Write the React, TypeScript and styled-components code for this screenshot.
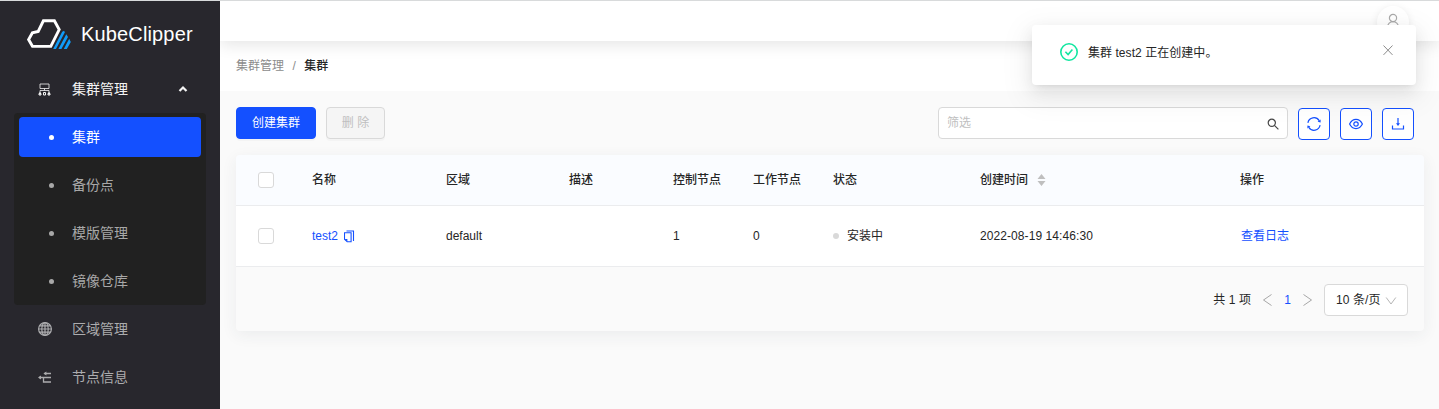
import React from 'react';
import styled, { createGlobalStyle } from 'styled-components';

const BLUE = '#1450ff';

const GlobalStyle = createGlobalStyle`
  * { box-sizing: border-box; }
  body {
    margin: 0;
    background: #fafafa;
    color: #262626;
    font: 12px/20px "Liberation Sans", "Noto Sans CJK SC", sans-serif;
    overflow: hidden;
  }
  svg { display: block; flex: none; }
`;

const Page = styled.div`
  display: flex;
  width: 100%;
  height: 409px;
  border-top: 1px solid #d8dadb;
`;

const Sidebar = styled.aside`
  width: 220px;
  flex: none;
  background: #28272d;
  padding: 0 14px;
`;

const Brand = styled.div`
  display: flex;
  align-items: center;
  gap: 9px;
  height: 64px;
  padding: 2px 0 0 13px;
  color: #fff;
  font-size: 20px;
  letter-spacing: 0.15px;
`;

const NavItem = styled.div<{ $bright?: boolean }>`
  display: flex;
  align-items: center;
  height: 48px;
  padding: 0 18px 0 23px;
  font-size: 14px;
  color: ${(p) => (p.$bright ? '#f4f4f4' : '#acacae')};
`;

const NavIcon = styled.span`
  width: 35px;
  flex: none;
`;

const NavLabel = styled.span`
  flex: 1;
`;

const SubMenu = styled.div`
  display: flex;
  flex-direction: column;
  gap: 8px;
  padding: 4px 5px;
  border-radius: 4px;
  background: #212121;
`;

const SubItem = styled.div<{ $active?: boolean }>`
  display: flex;
  align-items: center;
  gap: 18px;
  height: 40px;
  padding-left: 30px;
  border-radius: 4px;
  font-size: 14px;
  background: ${(p) => (p.$active ? BLUE : 'transparent')};
  color: ${(p) => (p.$active ? '#fff' : '#a8a8a8')};
`;

const Bullet = styled.span`
  width: 5px;
  height: 5px;
  border-radius: 50%;
  background: currentColor;
`;

const Main = styled.main`
  flex: 1;
  min-width: 0;
  overflow: hidden;
`;

const Header = styled.header`
  position: relative;
  display: flex;
  justify-content: flex-end;
  height: 40px;
  padding: 5px 30px 0 0;
  background: #fff;
  box-shadow: 0 4px 16px rgba(0, 0, 0, 0.1);
`;

const Avatar = styled.div`
  display: flex;
  justify-content: center;
  width: 32px;
  height: 32px;
  padding-top: 7px;
  border-radius: 50%;
  background: #fff;
  color: #aaa;
  box-shadow: 0 2px 8px rgba(0, 0, 0, 0.09);
`;

const Breadcrumb = styled.nav`
  display: flex;
  gap: 8.5px;
  height: 50px;
  padding: 15px 16px;
  background: #fff;
  color: #8c8c8c;
`;

const Current = styled.span`
  color: #262626;
  font-weight: 500;
`;

const Content = styled.section`
  padding: 16px 15px 0 16px;
`;

const Toolbar = styled.div`
  display: flex;
  align-items: flex-start;
  gap: 10px;
  height: 48px;
  padding-right: 10px;
`;

const Button = styled.button<{ $primary?: boolean }>`
  width: ${(p) => (p.$primary ? 80 : 59)}px;
  height: 32px;
  padding: 0;
  border: 1px solid ${(p) => (p.$primary ? BLUE : '#d9d9d9')};
  border-radius: 4px;
  background: ${(p) => (p.$primary ? BLUE : '#f5f5f5')};
  color: ${(p) => (p.$primary ? '#fff' : '#bfbfbf')};
  font: inherit;
  box-shadow: 0 2px 0 rgba(0, 0, 0, 0.025);
`;

const Search = styled.div`
  display: flex;
  justify-content: space-between;
  width: 350px;
  height: 32px;
  margin-left: auto;
  padding: 5px 8px;
  border: 1px solid #d9d9d9;
  border-radius: 4px;
  background: #fff;
  color: #bfbfbf;
`;

const SearchIcon = styled.span`
  padding-top: 5px;
  color: #444;
`;

const Tools = styled.div`
  display: flex;
  gap: 10px;
  padding-top: 1px;
`;

const IconButton = styled.button`
  display: flex;
  align-items: center;
  justify-content: center;
  width: 32px;
  height: 32px;
  padding: 0;
  border: 1px solid ${BLUE};
  border-radius: 4px;
  background: #fff;
  color: ${BLUE};
`;

const Table = styled.div`
  border-radius: 4px;
  background: #fafafa;
  overflow: hidden;
  box-shadow: 0 4px 16px rgba(39, 50, 71, 0.07);
`;

const Row = styled.div<{ $head?: boolean }>`
  display: grid;
  grid-template-columns: 76px 134px 123px 104px 80px 80px 147px 260px 1fr;
  align-items: center;
  height: ${(p) => (p.$head ? 51 : 61)}px;
  border-bottom: 1px solid #ebecee;
  background: ${(p) => (p.$head ? '#fafcff' : '#fff')};
  font-weight: ${(p) => (p.$head ? 500 : 400)};
`;

const Cell = styled.div<{ $gap?: number }>`
  display: flex;
  align-items: center;
  gap: ${(p) => p.$gap ?? 0}px;
`;

const CheckCell = styled(Cell)`
  padding-left: 22px;
`;

const Checkbox = styled.span`
  width: 16px;
  height: 16px;
  border: 1px solid #d9d9d9;
  border-radius: 3px;
  background: #fff;
`;

const Link = styled.a`
  color: ${BLUE};
`;

const ActionCell = styled(Cell)`
  padding-left: 1px;
`;

const DateCell = styled(Cell)`
  letter-spacing: 0.08px;
`;

const CopyMark = styled.span`
  color: ${BLUE};
`;

const StatusDot = styled.span`
  width: 6px;
  height: 6px;
  border-radius: 50%;
  background: #d9d9d9;
`;

const Pagination = styled.footer`
  display: flex;
  align-items: center;
  justify-content: flex-end;
  height: 64px;
  padding: 1px 16px 0 0;
`;

const Total = styled.span`
  letter-spacing: 0.1px;
`;

const Arrow = styled.span`
  color: #a6a6a6;
  margin: 0 10px;
`;

const PageNumber = styled.span`
  width: 9px;
  text-align: center;
  color: ${BLUE};
`;

const PageSize = styled.div`
  display: flex;
  align-items: center;
  gap: 4px;
  width: 84px;
  height: 32px;
  padding-left: 11px;
  border: 1px solid #d9d9d9;
  border-radius: 4px;
  background: #fff;
  letter-spacing: 0.1px;
`;

const Chevron = styled.span`
  color: #b5b5b5;
  padding-top: 2px;
`;

const Notice = styled.div`
  position: absolute;
  top: 25px;
  right: 23px;
  display: flex;
  width: 384px;
  height: 60px;
  padding: 18px 22px 0 28px;
  border-radius: 4px;
  background: #fff;
  box-shadow: 0 3px 6px -4px rgba(0, 0, 0, 0.12), 0 6px 16px rgba(0, 0, 0, 0.08),
    0 9px 28px 8px rgba(0, 0, 0, 0.05);
`;

const NoticeText = styled.span`
  flex: 1;
  padding-left: 10px;
  letter-spacing: 0.05px;
`;

const CloseMark = styled.span`
  padding-top: 1px;
  color: #8c8c8c;
`;

type StrokeProps = { w: number; h?: number; sw?: number; children: React.ReactNode };

const Stroke = ({ w, h = w, sw = 1, children }: StrokeProps) => (
  <svg width={w} height={h} viewBox={`0 0 ${w} ${h}`} fill="none" stroke="currentColor" strokeWidth={sw}>
    {children}
  </svg>
);

const Logo = () => (
  <svg width="45" height="32" viewBox="0 0 45 32" fill="none">
    <path d="M5.6 28.4 1.6 21.5 5.4 14.8 11.2 13.4 16.4 2.8H27.4L32.2 11.6 23.8 28.4Z" stroke="#fff" strokeWidth="2.9" />
    <path
      d="M26.2 31 35.2 13.8 37 12.8 37.9 14.2 29 31ZM31.4 31 39.3 16.2 41 18.9 34.4 31ZM36.8 31 42.2 20.8 43.8 24 39.8 31Z"
      fill="#109cf9"
    />
  </svg>
);

const ClusterIcon = () => (
  <Stroke w={15} h={16}>
    <path d="M3 3h9v4.5H3zM7.5 7.5v2M3 12V9.5h9V12" opacity="0.8" />
    <path d="M3 11v3M2 12.5h2v1.5H2zM12 11v3M11 12.5h2v1.5h-2zM6.5 11.5h2v2.5h-2z" />
  </Stroke>
);

const GlobeIcon = () => (
  <Stroke w={16} sw={1.2}>
    <circle cx="8" cy="8" r="6.4" />
    <ellipse cx="8" cy="8" rx="3.2" ry="6.4" />
    <path d="M8 1.6v12.8M1.6 8h12.8M2.6 4.9h10.8M2.6 11.1h10.8" />
  </Stroke>
);

const NodeIcon = () => (
  <Stroke w={16} sw={1.3}>
    <path d="M2 8.5h12M6.5 8.5v4.5H14M14 4.5H7.5" />
    <path d="M4 6.5v4L1 8.5zM9.4 2.4v4.2L6.4 4.5z" fill="currentColor" stroke="none" />
  </Stroke>
);

const navItems = [
  { label: '区域管理', icon: <GlobeIcon /> },
  { label: '节点信息', icon: <NodeIcon /> },
];

const subItems = ['集群', '备份点', '模版管理', '镜像仓库'];

export default function App() {
  return (
    <>
      <GlobalStyle />
      <Page>
        <Sidebar>
          <Brand>
            <Logo />
            KubeClipper
          </Brand>
          <NavItem $bright>
            <NavIcon><ClusterIcon /></NavIcon>
            <NavLabel>集群管理</NavLabel>
            <Stroke w={10} sw={2.2}><path d="M1.5 7 5 3.5 8.5 7" /></Stroke>
          </NavItem>
          <SubMenu>
            {subItems.map((label, i) => (
              <SubItem key={label} $active={i === 0}>
                <Bullet />
                {label}
              </SubItem>
            ))}
          </SubMenu>
          {navItems.map(({ label, icon }) => (
            <NavItem key={label}>
              <NavIcon>{icon}</NavIcon>
              <NavLabel>{label}</NavLabel>
            </NavItem>
          ))}
        </Sidebar>
        <Main>
          <Header>
            <Avatar>
              <Stroke w={14} h={15} sw={1.2}>
                <circle cx="7" cy="5" r="3.6" />
                <path d="M1.6 14a5.4 5.4 0 0 1 10.8 0" />
              </Stroke>
            </Avatar>
          </Header>
          <Breadcrumb>
            <span>集群管理</span>
            <span>/</span>
            <Current>集群</Current>
          </Breadcrumb>
          <Content>
            <Toolbar>
              <Button $primary>创建集群</Button>
              <Button disabled>删 除</Button>
              <Search>
                筛选
                <SearchIcon>
                  <Stroke w={12} sw={1.2}>
                    <circle cx="4.8" cy="4.8" r="3.6" />
                    <path d="m7.4 7.4 4 4" />
                  </Stroke>
                </SearchIcon>
              </Search>
              <Tools>
                <IconButton>
                  <Stroke w={16} sw={1.2}>
                    <path d="M1.9 6.8A6.2 6.2 0 0 1 13.2 4.6M14.1 9.2A6.2 6.2 0 0 1 2.8 11.4" />
                    <path d="M14.6 3.4v3.2l-3-.8zM1.4 12.6V9.4l3 .8z" fill="currentColor" stroke="none" />
                  </Stroke>
                </IconButton>
                <IconButton>
                  <Stroke w={16} sw={1.2}>
                    <path d="M1.6 8C4.6 1.9 11.4 1.9 14.4 8 11.4 14.1 4.6 14.1 1.6 8z" />
                    <circle cx="8" cy="8" r="2.2" />
                  </Stroke>
                </IconButton>
                <IconButton>
                  <Stroke w={16} sw={1.2}>
                    <path d="M2.5 9.6v3.4h11V9.6M8 2v6" />
                    <path d="M6 7.2h4L8 10z" fill="currentColor" stroke="none" />
                  </Stroke>
                </IconButton>
              </Tools>
            </Toolbar>
            <Table>
              <Row $head>
                <CheckCell><Checkbox /></CheckCell>
                <Cell>名称</Cell>
                <Cell>区域</Cell>
                <Cell>描述</Cell>
                <Cell>控制节点</Cell>
                <Cell>工作节点</Cell>
                <Cell>状态</Cell>
                <Cell $gap={9}>
                  创建时间
                  <svg width="9" height="12" viewBox="0 0 9 12" fill="#bfbfbf">
                    <path d="M4.5 0 8.5 5h-8zM4.5 12l4-5h-8z" />
                  </svg>
                </Cell>
                <Cell>操作</Cell>
              </Row>
              <Row>
                <CheckCell><Checkbox /></CheckCell>
                <Cell $gap={6}>
                  <Link>test2</Link>
                  <CopyMark>
                    <Stroke w={11} h={13} sw={1.1}>
                      <path d="M2.5 1h7v10M.5 2.8h6.6v9H3.2L.5 9.2z" />
                      <path d="M.5 9h2.9v2.8z" fill="currentColor" stroke="none" />
                    </Stroke>
                  </CopyMark>
                </Cell>
                <Cell>default</Cell>
                <Cell />
                <Cell>1</Cell>
                <Cell>0</Cell>
                <Cell $gap={8}>
                  <StatusDot />
                  安装中
                </Cell>
                <DateCell>2022-08-19 14:46:30</DateCell>
                <ActionCell><Link>查看日志</Link></ActionCell>
              </Row>
              <Pagination>
                <Total>共 1 项</Total>
                <Arrow>
                  <Stroke w={12}><path d="M10.5.5 2.5 6l8 5.5" /></Stroke>
                </Arrow>
                <PageNumber>1</PageNumber>
                <Arrow>
                  <Stroke w={12}><path d="m1.5.5 8 5.5-8 5.5" /></Stroke>
                </Arrow>
                <PageSize>
                  10 条/页
                  <Chevron>
                    <Stroke w={12}><path d="m1.2 2.5 4.8 6.5 4.8-6.5" /></Stroke>
                  </Chevron>
                </PageSize>
              </Pagination>
            </Table>
          </Content>
        </Main>
        <Notice>
          <Stroke w={18} sw={1.6}>
            <g stroke="#12e6a0">
              <circle cx="9" cy="9" r="8.2" />
              <path d="m5.4 8.8 2.7 2.8 4.3-5" />
            </g>
          </Stroke>
          <NoticeText>集群 test2 正在创建中。</NoticeText>
          <CloseMark>
            <Stroke w={12}><path d="m1.5 1.5 9 9.4M10.5 1.5l-9 9.4" /></Stroke>
          </CloseMark>
        </Notice>
      </Page>
    </>
  );
}
